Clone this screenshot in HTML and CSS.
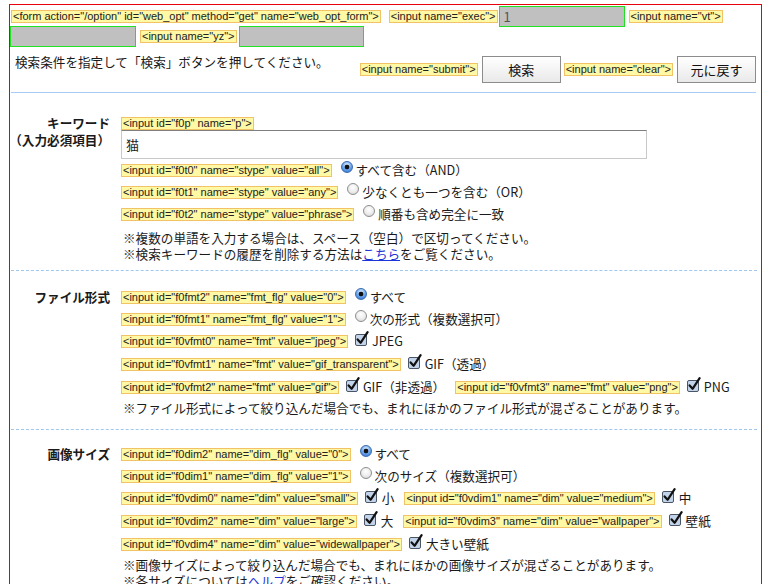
FILE: index.html
```html
<!DOCTYPE html>
<html lang="ja">
<head>
<meta charset="utf-8">
<title>検索オプション</title>
<link rel="stylesheet" href="styles.css">
</head>
<body>
<div class="frame">
  <div class="hrow r1">
    <span class="tag t-form">&lt;form action="/option" id="web_opt" method="get" name="web_opt_form"&gt;</span>
    <span class="tag t-exec">&lt;input name="exec"&gt;</span>
    <span class="hin h-exec">1</span>
    <span class="tag">&lt;input name="vt"&gt;</span>
  </div>
  <div class="hrow r2">
    <span class="hin h-vt"></span>
    <span class="tag t-yz">&lt;input name="yz"&gt;</span>
    <span class="hin h-yz"></span>
  </div>
  <div class="intro">
    <p class="lead">検索条件を指定して「検索」ボタンを押してください。</p>
    <div class="actions">
      <span class="tag">&lt;input name="submit"&gt;</span>
      <button class="btn b-submit" type="button">検索</button>
      <span class="tag">&lt;input name="clear"&gt;</span>
      <button class="btn b-clear" type="button">元に戻す</button>
    </div>
  </div>
  <div class="rule"></div>

  <div class="section kw">
    <div class="sec-label"><span>キーワード</span><span>（入力必須項目）</span></div>
    <div class="sec-body">
      <div class="tagline"><span class="tag">&lt;input id="f0p" name="p"&gt;</span></div>
      <div class="textbox">猫</div>
      <div class="opt"><span class="tag">&lt;input id="f0t0" name="stype" value="all"&gt;</span><span class="radio on"></span><span class="lbl">すべて含む（AND）</span></div>
      <div class="opt"><span class="tag">&lt;input id="f0t1" name="stype" value="any"&gt;</span><span class="radio"></span><span class="lbl">少なくとも一つを含む（OR）</span></div>
      <div class="opt"><span class="tag">&lt;input id="f0t2" name="stype" value="phrase"&gt;</span><span class="radio"></span><span class="lbl">順番も含め完全に一致</span></div>
      <div class="notes">
        <p>※複数の単語を入力する場合は、スペース（空白）で区切ってください。</p>
        <p>※検索キーワードの履歴を削除する方法は<a href="#">こちら</a>をご覧ください。</p>
      </div>
    </div>
  </div>

  <div class="section fmt">
    <div class="sec-label"><span>ファイル形式</span></div>
    <div class="sec-body">
      <div class="opt"><span class="tag">&lt;input id="f0fmt2" name="fmt_flg" value="0"&gt;</span><span class="radio on"></span><span class="lbl">すべて</span></div>
      <div class="opt"><span class="tag">&lt;input id="f0fmt1" name="fmt_flg" value="1"&gt;</span><span class="radio"></span><span class="lbl">次の形式（複数選択可）</span></div>
      <div class="opt c"><span class="tag">&lt;input id="f0vfmt0" name="fmt" value="jpeg"&gt;</span><svg class="cb" width="14" height="15" viewBox="0 0 14 15"><rect x="0.5" y="3.5" width="11" height="11" rx="1.5" fill="#c3d4ea" stroke="#4a5566"/><path d="M2.6 8.4 L5.6 11.8 L12.6 1.2" fill="none" stroke="#111" stroke-width="2.2" stroke-linecap="round" stroke-linejoin="round"/></svg><span class="lbl">JPEG</span></div>
      <div class="opt c"><span class="tag">&lt;input id="f0vfmt1" name="fmt" value="gif_transparent"&gt;</span><svg class="cb" width="14" height="15" viewBox="0 0 14 15"><rect x="0.5" y="3.5" width="11" height="11" rx="1.5" fill="#c3d4ea" stroke="#4a5566"/><path d="M2.6 8.4 L5.6 11.8 L12.6 1.2" fill="none" stroke="#111" stroke-width="2.2" stroke-linecap="round" stroke-linejoin="round"/></svg><span class="lbl">GIF（透過）</span></div>
      <div class="opt c"><span class="tag">&lt;input id="f0vfmt2" name="fmt" value="gif"&gt;</span><svg class="cb" width="14" height="15" viewBox="0 0 14 15"><rect x="0.5" y="3.5" width="11" height="11" rx="1.5" fill="#c3d4ea" stroke="#4a5566"/><path d="M2.6 8.4 L5.6 11.8 L12.6 1.2" fill="none" stroke="#111" stroke-width="2.2" stroke-linecap="round" stroke-linejoin="round"/></svg><span class="lbl">GIF（非透過）</span><span class="tag gap">&lt;input id="f0vfmt3" name="fmt" value="png"&gt;</span><svg class="cb" width="14" height="15" viewBox="0 0 14 15"><rect x="0.5" y="3.5" width="11" height="11" rx="1.5" fill="#c3d4ea" stroke="#4a5566"/><path d="M2.6 8.4 L5.6 11.8 L12.6 1.2" fill="none" stroke="#111" stroke-width="2.2" stroke-linecap="round" stroke-linejoin="round"/></svg><span class="lbl">PNG</span></div>
      <div class="notes">
        <p>※ファイル形式によって絞り込んだ場合でも、まれにほかのファイル形式が混ざることがあります。</p>
      </div>
    </div>
  </div>

  <div class="section dim">
    <div class="sec-label"><span>画像サイズ</span></div>
    <div class="sec-body">
      <div class="opt"><span class="tag">&lt;input id="f0dim2" name="dim_flg" value="0"&gt;</span><span class="radio on"></span><span class="lbl">すべて</span></div>
      <div class="opt"><span class="tag">&lt;input id="f0dim1" name="dim_flg" value="1"&gt;</span><span class="radio"></span><span class="lbl">次のサイズ（複数選択可）</span></div>
      <div class="opt c"><span class="tag">&lt;input id="f0vdim0" name="dim" value="small"&gt;</span><svg class="cb" width="14" height="15" viewBox="0 0 14 15"><rect x="0.5" y="3.5" width="11" height="11" rx="1.5" fill="#c3d4ea" stroke="#4a5566"/><path d="M2.6 8.4 L5.6 11.8 L12.6 1.2" fill="none" stroke="#111" stroke-width="2.2" stroke-linecap="round" stroke-linejoin="round"/></svg><span class="lbl">小</span><span class="tag gap">&lt;input id="f0vdim1" name="dim" value="medium"&gt;</span><svg class="cb" width="14" height="15" viewBox="0 0 14 15"><rect x="0.5" y="3.5" width="11" height="11" rx="1.5" fill="#c3d4ea" stroke="#4a5566"/><path d="M2.6 8.4 L5.6 11.8 L12.6 1.2" fill="none" stroke="#111" stroke-width="2.2" stroke-linecap="round" stroke-linejoin="round"/></svg><span class="lbl">中</span></div>
      <div class="opt c"><span class="tag">&lt;input id="f0vdim2" name="dim" value="large"&gt;</span><svg class="cb" width="14" height="15" viewBox="0 0 14 15"><rect x="0.5" y="3.5" width="11" height="11" rx="1.5" fill="#c3d4ea" stroke="#4a5566"/><path d="M2.6 8.4 L5.6 11.8 L12.6 1.2" fill="none" stroke="#111" stroke-width="2.2" stroke-linecap="round" stroke-linejoin="round"/></svg><span class="lbl">大</span><span class="tag gap">&lt;input id="f0vdim3" name="dim" value="wallpaper"&gt;</span><svg class="cb" width="14" height="15" viewBox="0 0 14 15"><rect x="0.5" y="3.5" width="11" height="11" rx="1.5" fill="#c3d4ea" stroke="#4a5566"/><path d="M2.6 8.4 L5.6 11.8 L12.6 1.2" fill="none" stroke="#111" stroke-width="2.2" stroke-linecap="round" stroke-linejoin="round"/></svg><span class="lbl">壁紙</span></div>
      <div class="opt c"><span class="tag">&lt;input id="f0vdim4" name="dim" value="widewallpaper"&gt;</span><svg class="cb" width="14" height="15" viewBox="0 0 14 15"><rect x="0.5" y="3.5" width="11" height="11" rx="1.5" fill="#c3d4ea" stroke="#4a5566"/><path d="M2.6 8.4 L5.6 11.8 L12.6 1.2" fill="none" stroke="#111" stroke-width="2.2" stroke-linecap="round" stroke-linejoin="round"/></svg><span class="lbl">大きい壁紙</span></div>
      <div class="notes">
        <p>※画像サイズによって絞り込んだ場合でも、まれにほかの画像サイズが混ざることがあります。</p>
        <p>※各サイズについては<a href="#">ヘルプ</a>をご確認ください。</p>
      </div>
    </div>
  </div>
</div>
</body>
</html>
```

FILE: styles.css
```css
* { box-sizing: border-box; }
html, body { margin: 0; padding: 0; background: #fff; }
body {
  font-family: "Noto Sans CJK JP", "Noto Sans", sans-serif;
  font-size: 12.6px;
  color: #1a1a1a;
}

.frame {
  margin: 4px 0 0 9px;
  width: 753px;
  height: 680px;
  border: 1px solid #e8000b;
  border-bottom: none;
}

.tag {
  display: inline-block;
  font-family: "Liberation Sans", Arial, sans-serif;
  font-size: 11px;
  line-height: 11px;
  padding: 0 1px;
  background: #fff8a4;
  border: 1px solid #f2c267;
  color: #222;
  white-space: nowrap;
  flex: none;
}

.hrow { display: flex; align-items: center; }
.r1 { padding-left: 1px; height: 22px; }
.r2 { height: 21px; margin-top: -1px; }
.hin {
  display: block;
  width: 126px;
  height: 21px;
  background-color: #c0c0c0;
  border: 1px solid #22e022;
  flex: none;
  font-size: 13px;
  line-height: 19px;
  padding-left: 4px;
  color: #555;
}
.t-form { margin-right: 8px; }
.t-exec { margin-right: 1px; }
.h-exec { margin-right: 4px; }
.h-vt { margin-right: 4px; }
.t-yz { margin-right: 2px; }
.h-yz { width: 125px; }

.intro { display: flex; margin-top: 6px; padding: 0 5px; }
.lead { margin: 0; line-height: 17px; }
.actions { margin-left: auto; margin-top: 3px; display: flex; align-items: center; }
.btn {
  width: 79px;
  height: 27px;
  border: 1px solid #8c8c8c;
  border-radius: 0;
  background: linear-gradient(#ffffff, #e9e9e9);
  font-family: "Noto Sans CJK JP", sans-serif;
  font-size: 13px;
  color: #111;
  padding: 0;
}
.b-submit { margin: 0 3px 0 4px; }
.b-clear { margin-left: 4px; }

.rule { height: 1px; background: #a8cdf5; margin: 9px 5px 0 1px; }

.section {
  display: flex;
  margin: 0 4px 0 1px;
  border-bottom: 1px dashed #9fc8f0;
}
.sec-label {
  width: 99px;
  flex: none;
  display: flex;
  flex-direction: column;
  align-items: flex-end;
  font-weight: bold;
  line-height: 17px;
  margin-top: 2px;
}
.sec-label span { white-space: nowrap; }
.sec-body { margin-left: 11px; flex: 1; }

.kw { padding: 24px 0 8px; }
.kw .sec-label { margin-top: -3px; }
.fmt { padding: 15px 0 13px; }
.dim { padding: 13px 0 0; border-bottom: none; }

.tagline { display: flex; height: 13px; }
.textbox {
  width: 526px;
  height: 29px;
  border: 1px solid #c9c9c9;
  border-top-color: #7f7f7f;
  font-size: 13px;
  line-height: 27px;
  padding-left: 4px;
}

.opt { display: flex; align-items: center; height: 22px; white-space: nowrap; }
.opt.c { height: 23px; }
.radio {
  display: inline-block;
  flex: none;
  width: 12px;
  height: 12px;
  border-radius: 50%;
  margin: 0 3px 6px 9px;
  border: 1px solid #8e8e8e;
  background: radial-gradient(circle at 50% 35%, #ffffff 0, #ececec 55%, #cdcdcd 100%);
}
.radio.on {
  border-color: #3b6cae;
  background:
    radial-gradient(circle, #111 0 2px, transparent 2.7px),
    radial-gradient(circle at 50% 30%, #e2f1ff 0, #6ea8ee 50%, #2a68cc 100%);
}
.cb { flex: none; margin: 0 3px 6px 7px; }
.lbl { line-height: 17px; margin-bottom: 2px; }
.gap { margin-left: 10px; }

.notes { margin-top: 1px; }
.kw .notes { margin-top: 5px; }
.notes p { margin: 0; line-height: 16px; padding-left: 2px; }
.notes a { color: #1b33d8; text-decoration: underline; }
```
